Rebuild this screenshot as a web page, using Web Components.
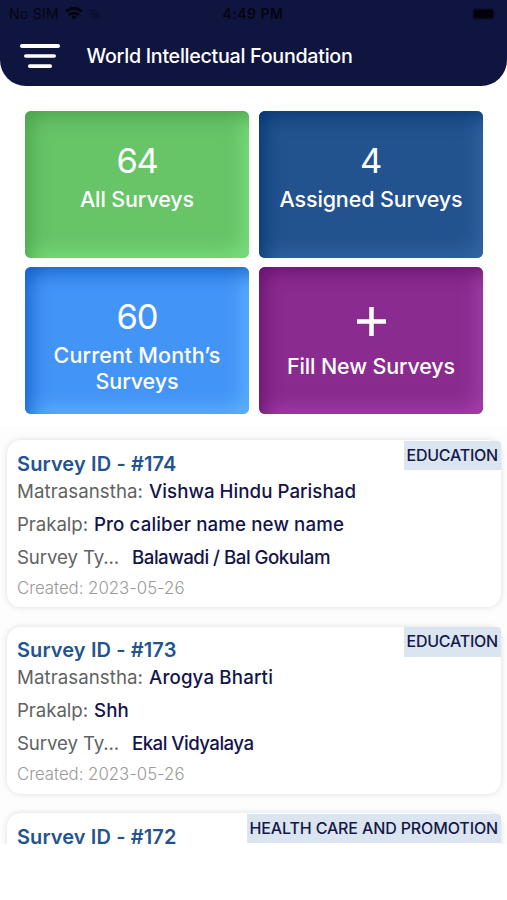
<!DOCTYPE html>
<html lang="en">
<head>
<meta charset="utf-8">
<title>World Intellectual Foundation</title>
<style>
body { margin: 0; background: #fff; font-family: Inter, "Liberation Sans", sans-serif; }
</style>
</head>
<body>
<survey-app></survey-app>
<script>
// A single run of text, tracked so that it spans the given advance width.
class FitText extends HTMLElement {
  connectedCallback() {
    const root = this.attachShadow({ mode: 'open' });
    root.innerHTML = '<style>:host{display:block;white-space:nowrap;flex:none}span{display:inline-block}</style><span><slot></slot></span>';
    const span = root.querySelector('span');
    const target = parseFloat(this.getAttribute('w'));
    const natural = span.getBoundingClientRect().width;
    span.style.letterSpacing = ((target - natural) / this.textContent.length).toFixed(3) + 'px';
    this.style.width = target + 'px';
  }
}

class StatusBar extends HTMLElement {
  connectedCallback() {
    this.attachShadow({ mode: 'open' }).innerHTML = `
    <style>
      :host { display: grid; grid-template-columns: 1fr auto 1fr; align-items: center; height: 27px; padding: 0 10px 0 9px; color: #04050f; font-size: 14px; line-height: 27px; }
      .left { display: flex; align-items: center; }
      svg { display: block; }
      .wifi { margin-left: 6px; }
      .bell { margin-left: 6px; opacity: .4; }
      .time { font-weight: 600; }
      .battery { justify-self: end; }
    </style>
    <div class="left">
      <fit-text w="50">No SIM</fit-text>
      <svg class="wifi" width="18" height="13" viewBox="0 0 18 13" fill="none" stroke="#04050f" stroke-width="2.8"><path d="M1 4.600a11.600 11.600 0 0 1 16 0M4 8.100a7.200 7.200 0 0 1 10 0"/><path d="M9 12.800L6.200 10.100a4 4 0 0 1 5.600 0z" fill="#04050f" stroke="none"/></svg>
      <svg class="bell" width="11" height="12" viewBox="0 0 11 12" fill="none" stroke="#04050f" stroke-width="1.200"><path d="M1.500 9h8c-1-1-1.300-2-1.300-4a2.700 2.700 0 0 0-5.400 0c0 2-.3 3-1.300 4zM4.500 10.700h2M.5 1.500l10 9.500"/></svg>
    </div>
    <fit-text class="time" w="61">4:49 PM</fit-text>
    <svg class="battery" width="25" height="12" viewBox="0 0 25 12"><rect x=".5" y=".5" width="22" height="11" rx="3" fill="none" stroke="#04050f" opacity=".25"/><rect x="1.500" y="1.500" width="20" height="9" rx="2" fill="#02030a"/><path d="M23.500 4v4q1.300-.7 1.300-2t-1.300-2z" fill="#04050f" opacity=".3"/></svg>`;
  }
}

class AppHeader extends HTMLElement {
  connectedCallback() {
    this.attachShadow({ mode: 'open' }).innerHTML = `
    <style>
      :host { display: block; box-sizing: border-box; height: 86px; background: #101540; border-radius: 0 0 26px 26px; color: #fff; font-size: 19.700px; font-weight: 500; }
      status-bar { font-weight: 400; }
      .bar { display: flex; align-items: center; height: 58px; padding-left: 20px; gap: 26.500px; }
      svg { display: block; }
    </style>
    <status-bar></status-bar>
    <div class="bar">
      <svg width="40" height="24" viewBox="0 0 40 24" fill="#fff"><rect width="40" height="4" rx="2"/><rect x="4" y="10.300" width="32" height="3.500" rx="1.700"/><rect x="8" y="20.300" width="24" height="3.700" rx="1.800"/></svg>
      <slot></slot>
    </div>`;
  }
}

class SurveyTile extends HTMLElement {
  connectedCallback() {
    this.attachShadow({ mode: 'open' }).innerHTML = `
    <style>
      :host { display: flex; flex-direction: column; align-items: center; box-sizing: border-box; height: 147px; padding-top: 28px; border-radius: 6px; color: #fff;
        background: var(--base); box-shadow: inset 10px 10px 20px -6px var(--dark), inset -10px -10px 20px -6px var(--light); }
      ::slotted([slot=figure]) { font-size: 34.500px; line-height: 43px; font-weight: 400; margin-bottom: 4px; }
      ::slotted(svg[slot=figure]) { display: block; margin: 11.500px 0 17.500px; }
      ::slotted(:not([slot])) { font-size: 21.500px; line-height: 26px; font-weight: 500; }
    </style>
    <slot name="figure"></slot><slot></slot>`;
  }
}

class SurveyCard extends HTMLElement {
  connectedCallback() {
    const a = n => this.getAttribute(n);
    const fit = (text, w, cls = '') => `<fit-text class="${cls}" w="${w}">${text}</fit-text>`;
    const pair = n => a(n).split('|');
    const rows = a('org') ? `
      <div class="row">${fit('Matrasanstha:', 126)}${fit(...pair('org'), 'v')}</div>
      <div class="row">${fit('Prakalp:', 71)}${fit(...pair('project'), 'v')}</div>
      <div class="row type">${fit('Survey Ty...', 102)}${fit(...pair('type'), 'v')}</div>
      <div class="date">${fit('Created: 2023-05-26', 167.5)}</div>` : '';
    this.attachShadow({ mode: 'open' }).innerHTML = `
    <style>
      :host { display: block; position: relative; box-sizing: border-box; height: 167px; padding: 13.600px 0 0 10px; background: #fff; border-radius: 14px; box-shadow: 0 0 6px rgba(0,0,0,.13); }
      .id { height: 20.700px; font-size: 20px; line-height: 21.300px; font-weight: 600; color: #23548f; }
      .row { display: flex; gap: 6px; font-size: 18.700px; line-height: 33px; color: #626262; }
      .type { gap: 13px; }
      .v { color: #14144a; font-weight: 500; }
      .date { font-size: 16.800px; line-height: 28.400px; font-weight: 300; color: #9a9a9a; }
      .tag { position: absolute; top: .3px; right: 0; height: 29.500px; padding: 0 3px; background: #dbe5ef; color: #14194a; font-size: 16px; line-height: 29.700px; font-weight: 500; border-top-right-radius: 4px; }
    </style>
    <div class="id">${fit(...pair('sid'))}</div>${rows}
    <div class="tag">${fit(...pair('tag'))}</div>`;
  }
}

class SurveyApp extends HTMLElement {
  connectedCallback() {
    this.attachShadow({ mode: 'open' }).innerHTML = `
    <style>
      :host { display: block; width: 507px; height: 900px; overflow: hidden; background: #fff; }
      .tiles { display: grid; grid-template-columns: 224px 224px; gap: 9px 10px; padding: 25px 25px 0; }
      .list { display: flex; flex-direction: column; gap: 19.500px; box-sizing: border-box; height: 418px; margin-top: 12px; padding: 14.300px 6px 0 7px; overflow: hidden; background: #fdfdfd; }
      .list > * { flex: none; }
      .green { --base: #67c467; --dark: #4aa148; --light: #7ce281; }
      .navy { --base: #22538f; --dark: #043775; --light: #3769a8; }
      .blue { --base: #4394f7; --dark: #0f5dc3; --light: #61b8ff; }
      .purple { --base: #8a2b8f; --dark: #691270; --light: #a544ab; }
    </style>
    <app-header><fit-text w="266">World Intellectual Foundation</fit-text></app-header>
    <div class="tiles">
      <survey-tile class="green"><fit-text slot="figure" w="41">64</fit-text><fit-text w="114">All Surveys</fit-text></survey-tile>
      <survey-tile class="navy"><fit-text slot="figure" w="22">4</fit-text><fit-text w="183">Assigned Surveys</fit-text></survey-tile>
      <survey-tile class="blue"><fit-text slot="figure" w="41">60</fit-text><fit-text w="167">Current Month’s</fit-text><fit-text w="83">Surveys</fit-text></survey-tile>
      <survey-tile class="purple"><svg slot="figure" width="29" height="29" viewBox="0 0 29 29"><path d="M14.500 0v29M0 14.500h29" stroke="#fff" stroke-width="4.500"/></svg><fit-text w="168">Fill New Surveys</fit-text></survey-tile>
    </div>
    <div class="list">
      <survey-card sid="Survey ID - #174|159.5" org="Vishwa Hindu Parishad|207" project="Pro caliber name new name|250" type="Balawadi / Bal Gokulam|198" tag="EDUCATION|91.5"></survey-card>
      <survey-card sid="Survey ID - #173|159.5" org="Arogya Bharti|124" project="Shh|35" type="Ekal Vidyalaya|121.5" tag="EDUCATION|91.5"></survey-card>
      <survey-card sid="Survey ID - #172|159.5" tag="HEALTH CARE AND PROMOTION|248.5"></survey-card>
    </div>`;
  }
}

customElements.define('fit-text', FitText);
customElements.define('status-bar', StatusBar);
customElements.define('survey-tile', SurveyTile);
customElements.define('survey-card', SurveyCard);
customElements.define('app-header', AppHeader);
customElements.define('survey-app', SurveyApp);
</script>
</body>
</html>
